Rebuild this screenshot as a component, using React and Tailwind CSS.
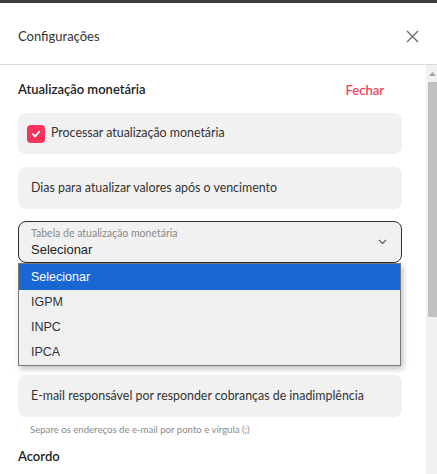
import React from 'react';

const font = { fontFamily: 'Lato, "Noto Sans", sans-serif' };
const arial = { fontFamily: '"Liberation Sans", Arial, sans-serif' };

const App = () => {
  return (
    <div className="w-[437px] h-[474px] bg-white flex flex-col overflow-hidden text-[#2b2b2b]" style={font}>
      <div className="h-[3px] bg-[#3b3b3b]" />
      <div className="h-[62px] flex items-center justify-between pl-[18px] pr-[18px] pt-[6px] border-b border-[#dadada]">
        <span className="text-[13px] text-[#333]">Configurações</span>
        <svg width="13" height="13" viewBox="0 0 13 13">
          <path d="M1 1L12 12M12 1L1 12" stroke="#6b6b6b" strokeWidth="1.4" />
        </svg>
      </div>
      <div className="flex flex-1 min-h-0">
        <div className="flex-1 pl-[18px] pr-[24px] pt-[15px] flex flex-col">
          <div className="flex items-center justify-between h-[20px]">
            <span className="text-[13px] font-semibold text-[#222]">Atualização monetária</span>
            <span className="text-[13px] font-semibold text-[#f43f5e] mr-[18px] mt-[2px]">Fechar</span>
          </div>
          <div className="mt-[13px] h-[41px] rounded-[8px] bg-[#f1f1f1] flex items-center pl-[9px] gap-[6px]">
            <span className="w-[18px] h-[18px] rounded-[4px] bg-[#f7345e] flex items-center justify-center">
              <svg width="10" height="10" viewBox="0 0 10 10">
                <path d="M1.8 5.2L4 7.3L8.2 2.8" stroke="white" strokeWidth="1.8" fill="none" strokeLinecap="round" strokeLinejoin="round" />
              </svg>
            </span>
            <span className="text-[12.4px] text-[#333]">Processar atualização monetária</span>
          </div>
          <div className="mt-[13px] h-[42px] rounded-[8px] bg-[#f1f1f1] flex items-center pl-[13px]">
            <span className="text-[12.4px] text-[#333]">Dias para atualizar valores após o vencimento</span>
          </div>
          <div className="relative mt-[12px]">
            <div className="h-[42px] rounded-[8px] bg-[#f1f1f1] border border-[#2e2e2e] flex items-center justify-between pl-[12px] pr-[14px]">
              <div className="flex flex-col leading-none">
                <span className="text-[10.5px] text-[#8a8a8a]">Tabela de atualização monetária</span>
                <span className="text-[13px] text-[#222] mt-[4px]" style={arial}>Selecionar</span>
              </div>
              <svg width="9" height="6" viewBox="0 0 9 6">
                <path d="M1 1L4.5 4.5L8 1" stroke="#555" strokeWidth="1.1" fill="none" />
              </svg>
            </div>
            <div
              className="absolute left-0 top-[42px] w-[383px] bg-[#f0f0f0] border border-[#7a7a7a] shadow-[2px_3px_6px_rgba(0,0,0,0.25)] z-10 text-[12.5px] text-[#333]"
              style={arial}
            >
              <div className="h-[26px] bg-[#1967d2] text-white flex items-center pl-[12px]">Selecionar</div>
              <div className="h-[25px] flex items-center pl-[12px]">IGPM</div>
              <div className="h-[25px] flex items-center pl-[12px]">INPC</div>
              <div className="h-[25px] flex items-center pl-[12px]">IPCA</div>
            </div>
          </div>
          <div className="mt-[112px] h-[42px] rounded-[8px] bg-[#f1f1f1] flex items-center pl-[13px]">
            <span className="text-[12.4px] text-[#333]">E-mail responsável por responder cobranças de inadimplência</span>
          </div>
          <span className="mt-[6px] pl-[12px] text-[9.6px] text-[#8a8a8a]">Separe os endereços de e-mail por ponto e vírgula (;)</span>
          <span className="mt-[10px] text-[13px] font-semibold text-[#222]">Acordo</span>
        </div>
        <div className="w-[11px] bg-[#f1f1f1] flex flex-col items-end">
          <div className="h-[17px] w-[9px] flex items-center justify-center">
            <svg width="7" height="4" viewBox="0 0 7 4">
              <path d="M0 4L3.5 0L7 4Z" fill="#a3a3a3" />
            </svg>
          </div>
          <div className="w-[9px] h-[235px] bg-[#c1c1c1]" />
        </div>
      </div>
    </div>
  );
};

export default App;
